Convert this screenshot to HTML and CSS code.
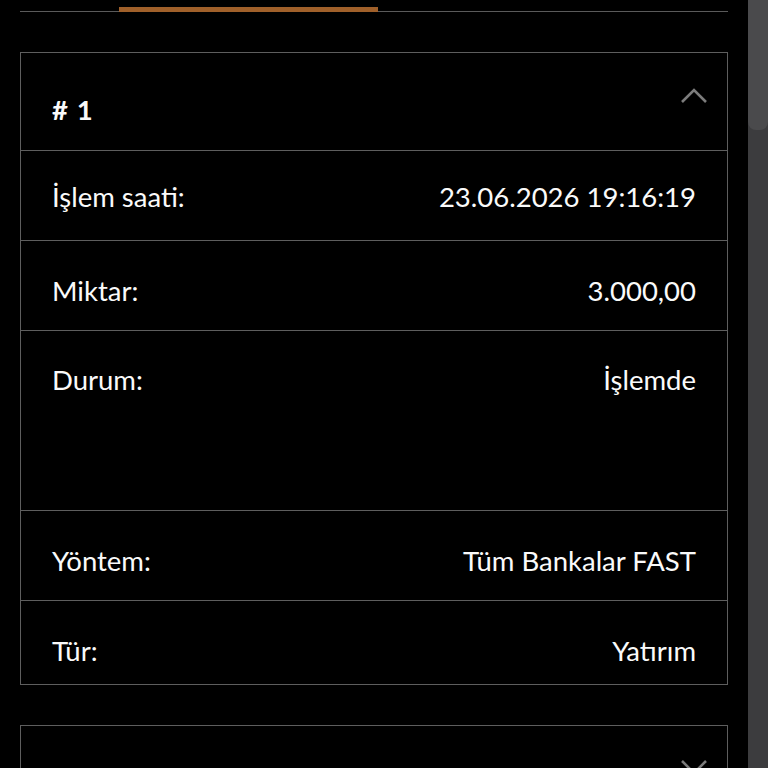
FILE: index.html
```html
<!DOCTYPE html>
<html lang="tr">
<head>
<meta charset="utf-8">
<link rel="stylesheet" href="styles.css">
</head>
<body>
<div class="page">
  <main class="main">
    <div class="tabs"><div class="tab-indicator"></div></div>

    <section class="card">
      <div class="card-head">
        <span class="card-title"># 1</span>
        <svg class="chev" width="28" height="18" viewBox="0 0 28 18"><path d="M2 16 L14 4 L26 16" fill="none" stroke="#7c7c7c" stroke-width="2.6"/></svg>
      </div>
      <div class="row row-first"><span>İşlem saati:</span><span>23.06.2026 19:16:19</span></div>
      <div class="row"><span>Miktar:</span><span>3.000,00</span></div>
      <div class="row row-tall"><span>Durum:</span><span>İşlemde</span></div>
      <div class="row"><span>Yöntem:</span><span>Tüm Bankalar FAST</span></div>
      <div class="row row-last"><span>Tür:</span><span>Yatırım</span></div>
    </section>

    <section class="card">
      <div class="card-head card-head-end">
        <svg class="chev" width="28" height="18" viewBox="0 0 28 18"><path d="M2 2 L14 14 L26 2" fill="none" stroke="#7c7c7c" stroke-width="2.6"/></svg>
      </div>
    </section>
  </main>
  <div class="scrollbar"><div class="thumb"></div></div>
</div>
</body>
</html>
```
FILE: styles.css
```css
html, body {
  margin: 0;
  padding: 0;
  background: #000;
  height: 100%;
  overflow: hidden;
}
body {
  font-family: Lato, "Open Sans", sans-serif;
  color: #fafafa;
}
.page {
  display: flex;
  height: 768px;
}
.main {
  flex: 1;
  padding: 0 20px;
  overflow: hidden;
}
.tabs {
  height: 11px;
  border-bottom: 1px solid #5a5a5a;
  position: relative;
}
.tab-indicator {
  position: absolute;
  left: 99px;
  width: 259px;
  top: 7px;
  height: 5px;
  background: #a0602a;
}
.card {
  margin-top: 40px;
  border: 1px solid #5e5e5e;
}
.card-head {
  height: 97px;
  display: flex;
  align-items: center;
  justify-content: space-between;
  padding: 0 19px 0 31px;
}
.card-head-end {
  justify-content: flex-end;
}
.card-title {
  font-size: 27.5px;
  font-weight: 700;
  padding-top: 16px;
  word-spacing: 2px;
}
.chev {
  margin-bottom: 14px;
}
.row {
  border-top: 1px solid #5e5e5e;
  display: flex;
  justify-content: space-between;
  align-items: flex-start;
  padding: 0 31px;
  font-size: 27.5px;
  box-sizing: border-box;
  height: 90px;
  padding-top: 33px;
}
.row-first {
  padding-top: 29px;
}
.row-tall {
  height: 180px;
  padding-top: 32px;
}
.row-last {
  height: 84px;
}
.scrollbar {
  width: 20px;
  background: #3c3c3e;
  flex: none;
}
.thumb {
  height: 130px;
  background: #4a4a4c;
  border-radius: 0 0 8px 8px;
}
```
